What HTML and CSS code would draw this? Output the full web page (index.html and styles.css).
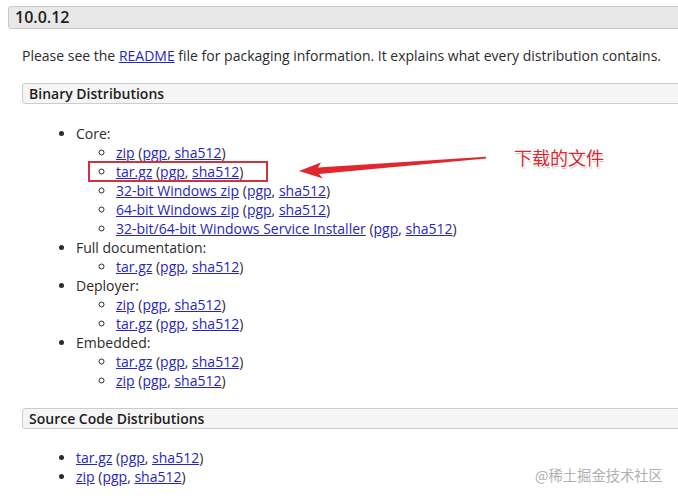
FILE: index.html
```html
<!DOCTYPE html>
<html>
<head>
<meta charset="utf-8">
<link rel="stylesheet" href="styles.css">
</head>
<body>
<div class="page">
  <h3 class="version">10.0.12</h3>
  <div class="section">
    <p class="intro">Please see the <a href="#">README</a> file for packaging information. It explains what every distribution contains.</p>
    <h4 class="subhead">Binary Distributions</h4>
    <ul class="list list-binary">
      <li>Core:
        <ul class="sub">
          <li><a href="#">zip</a> (<a href="#">pgp</a>, <a href="#">sha512</a>)</li>
          <li><a href="#">tar.gz</a> (<a href="#">pgp</a>, <a href="#">sha512</a>)</li>
          <li><a href="#">32-bit Windows zip</a> (<a href="#">pgp</a>, <a href="#">sha512</a>)</li>
          <li><a href="#">64-bit Windows zip</a> (<a href="#">pgp</a>, <a href="#">sha512</a>)</li>
          <li><a href="#">32-bit/64-bit Windows Service Installer</a> (<a href="#">pgp</a>, <a href="#">sha512</a>)</li>
        </ul>
      </li>
      <li>Full documentation:
        <ul class="sub">
          <li><a href="#">tar.gz</a> (<a href="#">pgp</a>, <a href="#">sha512</a>)</li>
        </ul>
      </li>
      <li>Deployer:
        <ul class="sub">
          <li><a href="#">zip</a> (<a href="#">pgp</a>, <a href="#">sha512</a>)</li>
          <li><a href="#">tar.gz</a> (<a href="#">pgp</a>, <a href="#">sha512</a>)</li>
        </ul>
      </li>
      <li>Embedded:
        <ul class="sub">
          <li><a href="#">tar.gz</a> (<a href="#">pgp</a>, <a href="#">sha512</a>)</li>
          <li><a href="#">zip</a> (<a href="#">pgp</a>, <a href="#">sha512</a>)</li>
        </ul>
      </li>
    </ul>
    <h4 class="subhead">Source Code Distributions</h4>
    <ul class="list">
      <li><a href="#">tar.gz</a> (<a href="#">pgp</a>, <a href="#">sha512</a>)</li>
      <li><a href="#">zip</a> (<a href="#">pgp</a>, <a href="#">sha512</a>)</li>
    </ul>
  </div>

  <div class="highlight"></div>
  <svg class="arrow" width="678" height="500" viewBox="0 0 678 500">
    <polygon points="299,171 321,162.5 318,167.5 486,156.8 486,158.6 319,174 323,178.5" fill="#e2262e"/>
  </svg>
  <div class="note">下载的文件</div>
  <div class="watermark">@稀土掘金技术社区</div>
</div>
</body>
</html>
```
FILE: styles.css
```css
html, body {
  margin: 0;
  padding: 0;
  background: #ffffff;
}
body {
  overflow: hidden;
  width: 678px;
  height: 500px;
}
.page {
  position: relative;
  width: 678px;
  height: 500px;
  font-family: "Open Sans", "Noto Sans", sans-serif;
  font-size: 14px;
  line-height: 19px;
  color: #2b2b2b;
  padding-top: 6px;
  box-sizing: border-box;
}
.version {
  margin: 0 -10px 0 8px;
  height: 23px;
  box-sizing: border-box;
  border: 1px solid #c8c8c8;
  border-radius: 3px;
  background: #e8e8e8;
  font-size: 16px;
  font-weight: 600;
  line-height: 21px;
  padding-left: 6px;
  color: #1e1e1e;
}
.section {
  padding-left: 22px;
}
.intro {
  margin: 17px 0 18px 0;
}
a {
  color: #2626c2;
  text-decoration: underline;
}
.subhead {
  margin: 0 -10px 0 0;
  height: 21px;
  box-sizing: border-box;
  border: 1px solid #cccccc;
  border-radius: 3px;
  background: #f5f5f5;
  font-size: 14px;
  font-weight: 600;
  line-height: 20px;
  padding-left: 6px;
  color: #1e1e1e;
}
.list {
  margin: 19px 0 19px 0;
  padding-left: 54px;
  list-style: disc;
}
.list-binary {
  margin-top: 20px;
  margin-bottom: 18px;
}
.sub {
  margin: 0;
  padding-left: 40px;
  list-style: circle;
}
.highlight {
  position: absolute;
  left: 88px;
  top: 161px;
  width: 180px;
  height: 21px;
  box-sizing: border-box;
  border: 2px solid #d5313a;
}
.arrow {
  position: absolute;
  left: 0;
  top: 0;
}
.note {
  position: absolute;
  left: 514px;
  top: 146px;
  font-family: "Noto Sans CJK SC", sans-serif;
  font-size: 18px;
  line-height: 23px;
  color: #e0242c;
  text-shadow: 1px 1px 0 #ffffff, -1px -1px 0 #ffffff, 1px -1px 0 #ffffff, -1px 1px 0 #ffffff, 1px 2px 1px #bdbdbd;
}
.watermark {
  position: absolute;
  left: 535px;
  top: 465px;
  font-family: "Noto Sans CJK SC", sans-serif;
  font-size: 14.3px;
  line-height: 20px;
  color: #b0b0b0;
}
```
